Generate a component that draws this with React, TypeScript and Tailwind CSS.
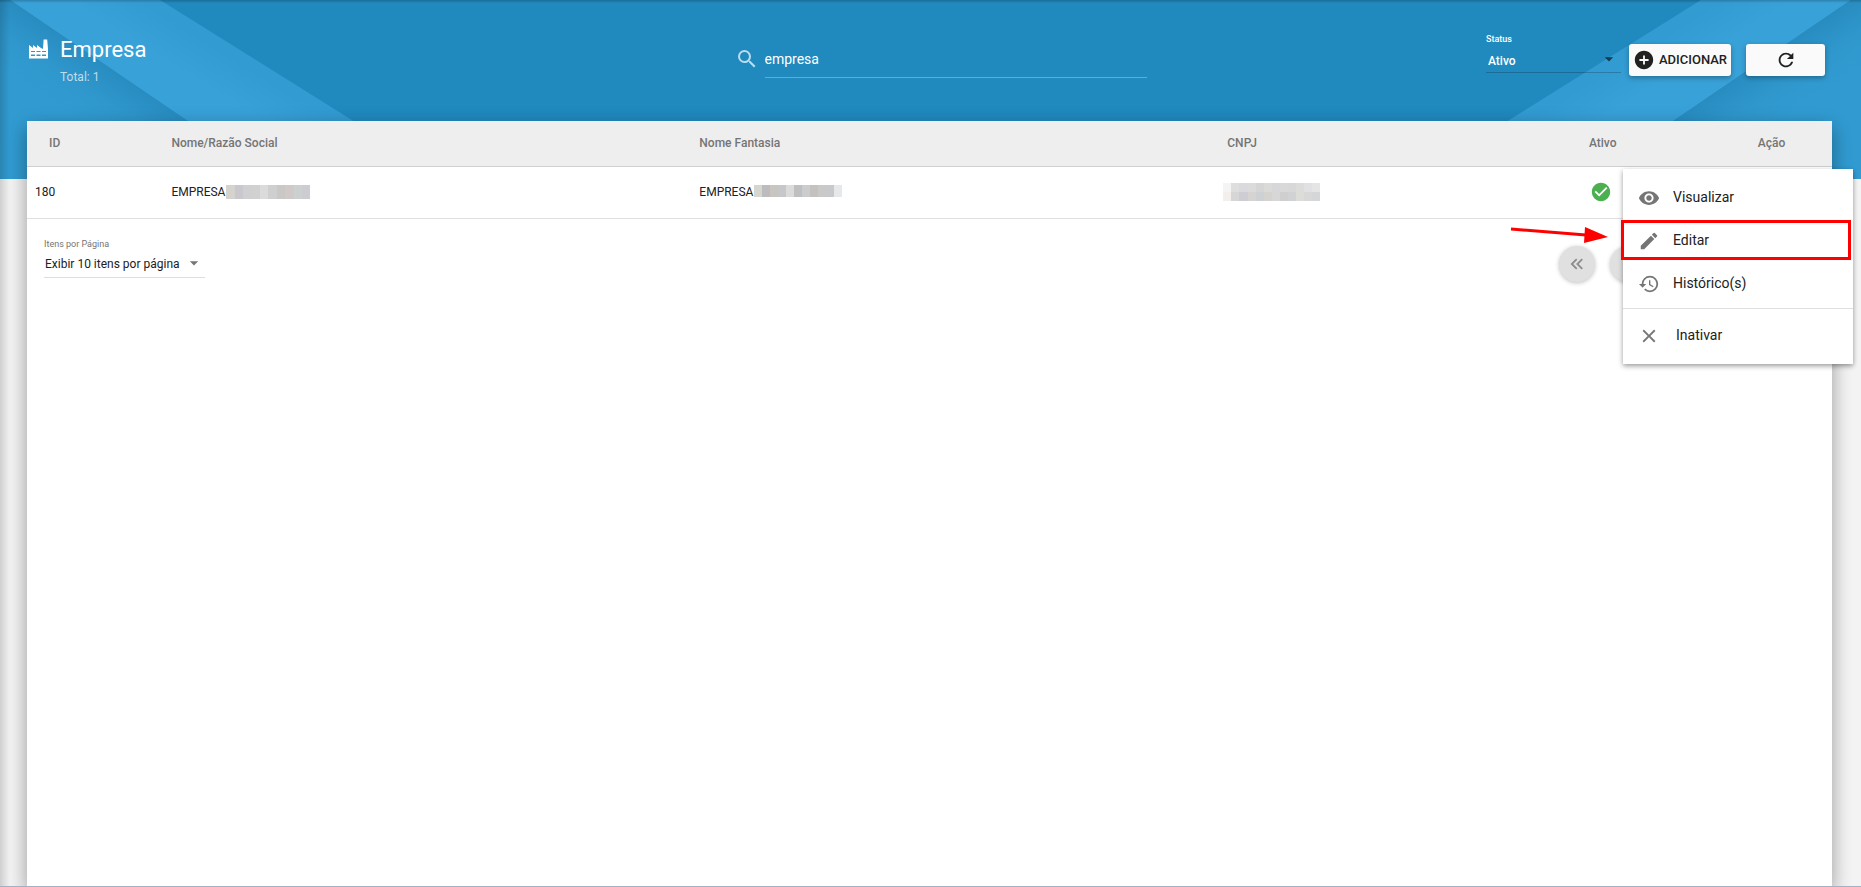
import { useState } from "react";
import {
  MdAddCircle,
  MdArrowDropDown,
  MdCheckCircle,
  MdClose,
  MdEdit,
  MdHistory,
  MdRefresh,
  MdRemoveRedEye,
  MdSearch,
} from "react-icons/md";

const menuItems = [
  { label: "Visualizar", icon: MdRemoveRedEye },
  { label: "Editar", icon: MdEdit, highlighted: true },
  { label: "Histórico(s)", icon: MdHistory },
];

const nameMask = [["#d5d3cd", "#c9c9cd", "#cfd0d1", "#d1d1d1", "#dcdbda", "#cfcfd0", "#cac8c6", "#cfcac7", "#cdd0d0", "#cccdd1"]];
const fantasyMask = [["#d6d6d1", "#bdbbbe", "#c9c6c2", "#c5c7c9", "#dadbda", "#bec0c0", "#cbcccd", "#c3c2c1", "#c9c9c8", "#c8c9ca", "#e7e8ea"]];
const cnpjMask = [
  ["#f5f4f3", "#dedede", "#d9dade", "#dcdbdc", "#d5d5d5", "#dadad9", "#d6d7d9", "#d9d9da", "#d6d8da", "#dcdddb", "#e0e1e2", "#e4e6e5"],
  ["#f2efec", "#d6d6d6", "#cdcdd3", "#d5d4d2", "#cdd1d4", "#d4d3d0", "#d7d7d7", "#cfcfcf", "#d1d2d3", "#dcdcd8", "#d8d8d9", "#d5d6d7"],
];

function Mask({ rows, className }: { rows: string[][]; className: string }) {
  return (
    <span className={`inline-flex flex-col ${className}`} aria-hidden="true">
      {rows.map((row, i) => (
        <span key={i} className="flex flex-1">
          {row.map((color, j) => (
            <span key={j} className="flex-1" style={{ backgroundColor: color }} />
          ))}
        </span>
      ))}
    </span>
  );
}

function FactoryIcon({ className }: { className?: string }) {
  return (
    <svg viewBox="0 0 20 20" className={className} fill="currentColor" aria-hidden="true">
      <path
        fillRule="evenodd"
        d="M1 6l4 3V6l4 3V6l4 3 2 1 .6-9.5h3.6L20 10v9.500H1V6zm2 6v1h4v-1H3zm5.500 0v1h4v-1h-4zm5.500 0v1h4v-1h-4zM3 15.500v1.500h4v-1.500H3zm5.500 0v1.500h4v-1.500h-4zm5.500 0v1.500h4v-1.500h-4z"
      />
    </svg>
  );
}

function Ribbon({ id, className }: { id: string; className: string }) {
  return (
    <svg viewBox="0 0 450 179" className={className} aria-hidden="true">
      <defs>
        <linearGradient id={`${id}-band`} gradientUnits="userSpaceOnUse" x1="160" y1="125" x2="210" y2="44">
          <stop offset="0" stopColor="#38a1d8" />
          <stop offset="0.6" stopColor="#38a1d8" />
          <stop offset="1" stopColor="#329bd2" />
        </linearGradient>
        <linearGradient id={`${id}-corner`} gradientUnits="userSpaceOnUse" x1="99" y1="60" x2="64" y2="112">
          <stop offset="0" stopColor="#288cc0" />
          <stop offset="0.5" stopColor="#2f97cc" />
          <stop offset="1" stopColor="#319bd1" />
        </linearGradient>
      </defs>
      <path d="M10 0H160L446 179H273Z" fill={`url(#${id}-band)`} />
      <path d="M0 0H10L273 179H0Z" fill={`url(#${id}-corner)`} />
    </svg>
  );
}

export default function App() {
  const [search, setSearch] = useState("empresa");

  return (
    <div className="relative flex min-h-screen flex-col overflow-hidden border-b border-[#9fb2c6] bg-[#f3f3f3] font-[Roboto,sans-serif] text-[#212121]">
      <div className="absolute inset-x-0 top-0 flex h-[179px] justify-between overflow-hidden bg-[#2089be]">
        <Ribbon id="left" className="h-full w-[450px]" />
        <Ribbon id="right" className="h-full w-[450px] -scale-x-100" />
      </div>
      <div className="pointer-events-none absolute inset-y-0 left-0 w-[10px] bg-linear-to-r from-black/15 to-transparent" />
      <div className="pointer-events-none absolute inset-x-0 top-0 h-[3px] bg-linear-to-b from-black/20 to-transparent" />

      <header className="relative flex h-[121px] justify-between pr-9 pl-7">
        <div className="flex flex-1 gap-3 pt-7">
          <FactoryIcon className="mt-[11px] size-5 text-white" />
          <div>
            <h1 className="text-[22px] leading-[43px] text-white">Empresa</h1>
            <p className="text-xs leading-3 text-white/70">Total: 1</p>
          </div>
        </div>

        <label className="flex w-[440px] items-start gap-[6px] pt-10 pl-7">
          <MdSearch className="mt-[7px] size-6 shrink-0 text-white/70" />
          <input
            aria-label="Pesquisar"
            value={search}
            onChange={(e) => setSearch(e.target.value)}
            className="h-[38px] w-full border-b border-white/30 bg-transparent text-sm text-white outline-none"
          />
        </label>

        <div className="flex flex-1 items-start justify-end pt-8">
          <div className="mr-2 w-[135px]">
            <label htmlFor="status" className="block text-[9px] leading-[14px] font-medium text-white">
              Status
            </label>
            <div className="relative flex items-center border-b border-black/20">
              <select
                id="status"
                className="h-[26px] w-full appearance-none bg-transparent px-[2px] pt-1 text-xs font-medium text-white outline-none"
              >
                <option>Ativo</option>
              </select>
              <MdArrowDropDown className="pointer-events-none absolute right-[2px] size-5 text-black/60" />
            </div>
          </div>
          <button className="mt-3 mr-[15px] flex h-8 w-[102px] items-center justify-center gap-1 rounded-[3px] bg-[#fafafa] text-[13px] font-medium shadow-[0_2px_5px_rgba(0,0,0,0.3)]">
            <MdAddCircle className="size-[22px] shrink-0" />
            ADICIONAR
          </button>
          <button
            aria-label="Atualizar"
            className="mt-3 flex h-8 w-[79px] items-center justify-center rounded-[3px] bg-[#fafafa] shadow-[0_2px_5px_rgba(0,0,0,0.3)]"
          >
            <MdRefresh className="size-[22px]" />
          </button>
        </div>
      </header>

      <main className="relative mr-[29px] ml-[27px] flex-1 bg-white shadow-[0_8px_17px_rgba(0,0,0,0.2),0_6px_20px_rgba(0,0,0,0.19)]">
        <table className="w-full table-fixed border-collapse text-left text-xs">
          <thead>
            <tr className="h-[45px] border-b border-[#cfcfcf] bg-[#eeeeee] text-[#757575]">
              <th className="w-[7.5%] pl-[22px] font-medium">ID</th>
              <th className="w-[29.25%] pl-[9px] font-medium">Nome/Razão Social</th>
              <th className="w-[29.25%] pl-[9px] font-medium">Nome Fantasia</th>
              <th className="w-[15.3%] pl-[9px] font-medium">CNPJ</th>
              <th className="w-[12%] text-center font-medium">Ativo</th>
              <th className="w-[6.7%] text-center font-medium">Ação</th>
            </tr>
          </thead>
          <tbody>
            <tr className="h-[52px] border-b border-[#e0e0e0]">
              <td className="pl-2">180</td>
              <td className="pl-[9px]">
                <div className="flex items-center gap-[1px]">
                  EMPRESA <Mask rows={nameMask} className="h-[14px] w-[84px]" />
                </div>
              </td>
              <td className="pl-[9px]">
                <div className="flex items-center gap-[1px]">
                  EMPRESA <Mask rows={fantasyMask} className="mb-[3px] h-3 w-[88px]" />
                </div>
              </td>
              <td className="pl-[5px]">
                <Mask rows={cnpjMask} className="h-[18px] w-[97px] align-middle" />
              </td>
              <td className="pr-1">
                <MdCheckCircle className="mx-auto size-[22px] text-[#4caf50]" />
              </td>
              <td />
            </tr>
          </tbody>
        </table>

        <div className="flex items-start justify-between pt-[19px] pr-5 pl-[17px]">
          <div className="w-[161px]">
            <label htmlFor="page-size" className="block text-[9px] leading-3 text-[#757575]">
              Itens por Página
            </label>
            <div className="relative flex items-center border-b border-[#dedede]">
              <select id="page-size" className="h-[27px] w-full appearance-none bg-transparent pt-[2px] pl-[1px] text-xs outline-none">
                <option>Exibir 10 itens por página</option>
              </select>
              <MdArrowDropDown className="pointer-events-none absolute right-[1px] size-5 text-[#757575]" />
            </div>
          </div>
          <div className="mt-2 flex w-[253px] gap-[15px]">
            {["Primeira página", "Página anterior", "Próxima página", "Última página"].map((label, i) => (
              <button
                key={label}
                aria-label={label}
                className="flex size-9 items-center justify-center rounded-full bg-[#e0e0e0] text-[#8b8b8b] shadow-[0_1px_4px_rgba(0,0,0,0.25)]"
              >
                <svg viewBox="0 0 24 24" className={i > 1 ? "size-[22px] rotate-180" : "size-[22px]"} fill="currentColor">
                  {(i === 0 || i === 3) && <path d="M18.400 7.400 17 6l-6 6 6 6 1.400-1.400-4.600-4.600 4.600-4.600z" />}
                  {(i === 0 || i === 3) && <path d="M12.400 7.400 11 6l-6 6 6 6 1.400-1.400L7.800 12l4.600-4.600z" />}
                  {(i === 1 || i === 2) && <path d="M15.400 7.400 14 6l-6 6 6 6 1.400-1.400-4.600-4.600 4.600-4.600z" />}
                </svg>
              </button>
            ))}
          </div>
        </div>
      </main>

      <div className="absolute top-[169px] right-2 w-[230px] bg-white pt-[6px] pb-2 text-sm shadow-[0_2px_5px_rgba(0,0,0,0.4)]">
        {menuItems.map(({ label, icon: Icon, highlighted }) => (
          <button key={label} className="relative flex h-[43px] w-full items-center gap-[13px] pl-[15px]">
            <Icon className="mt-[3px] size-[22px] text-[#757575]" />
            {label}
            {highlighted && <span className="absolute inset-x-0 top-[2px] h-10 -translate-x-[2px] border-[3px] border-[#ff0000]" />}
          </button>
        ))}
        <hr className="my-1 border-[#dedede]" />
        <button className="flex h-[43px] w-full items-center gap-4 pl-[15px]">
          <MdClose className="mt-[3px] size-[22px] text-[#757575]" />
          Inativar
        </button>
      </div>

      <svg viewBox="0 0 98 18" className="absolute top-[226px] right-[253px] h-[18px] w-[98px]" aria-hidden="true">
        <path d="M1 3 76 9" stroke="#ff0000" strokeWidth="3" />
        <path d="M75 1 98 11 74 17Z" fill="#ff0000" />
      </svg>
    </div>
  );
}
